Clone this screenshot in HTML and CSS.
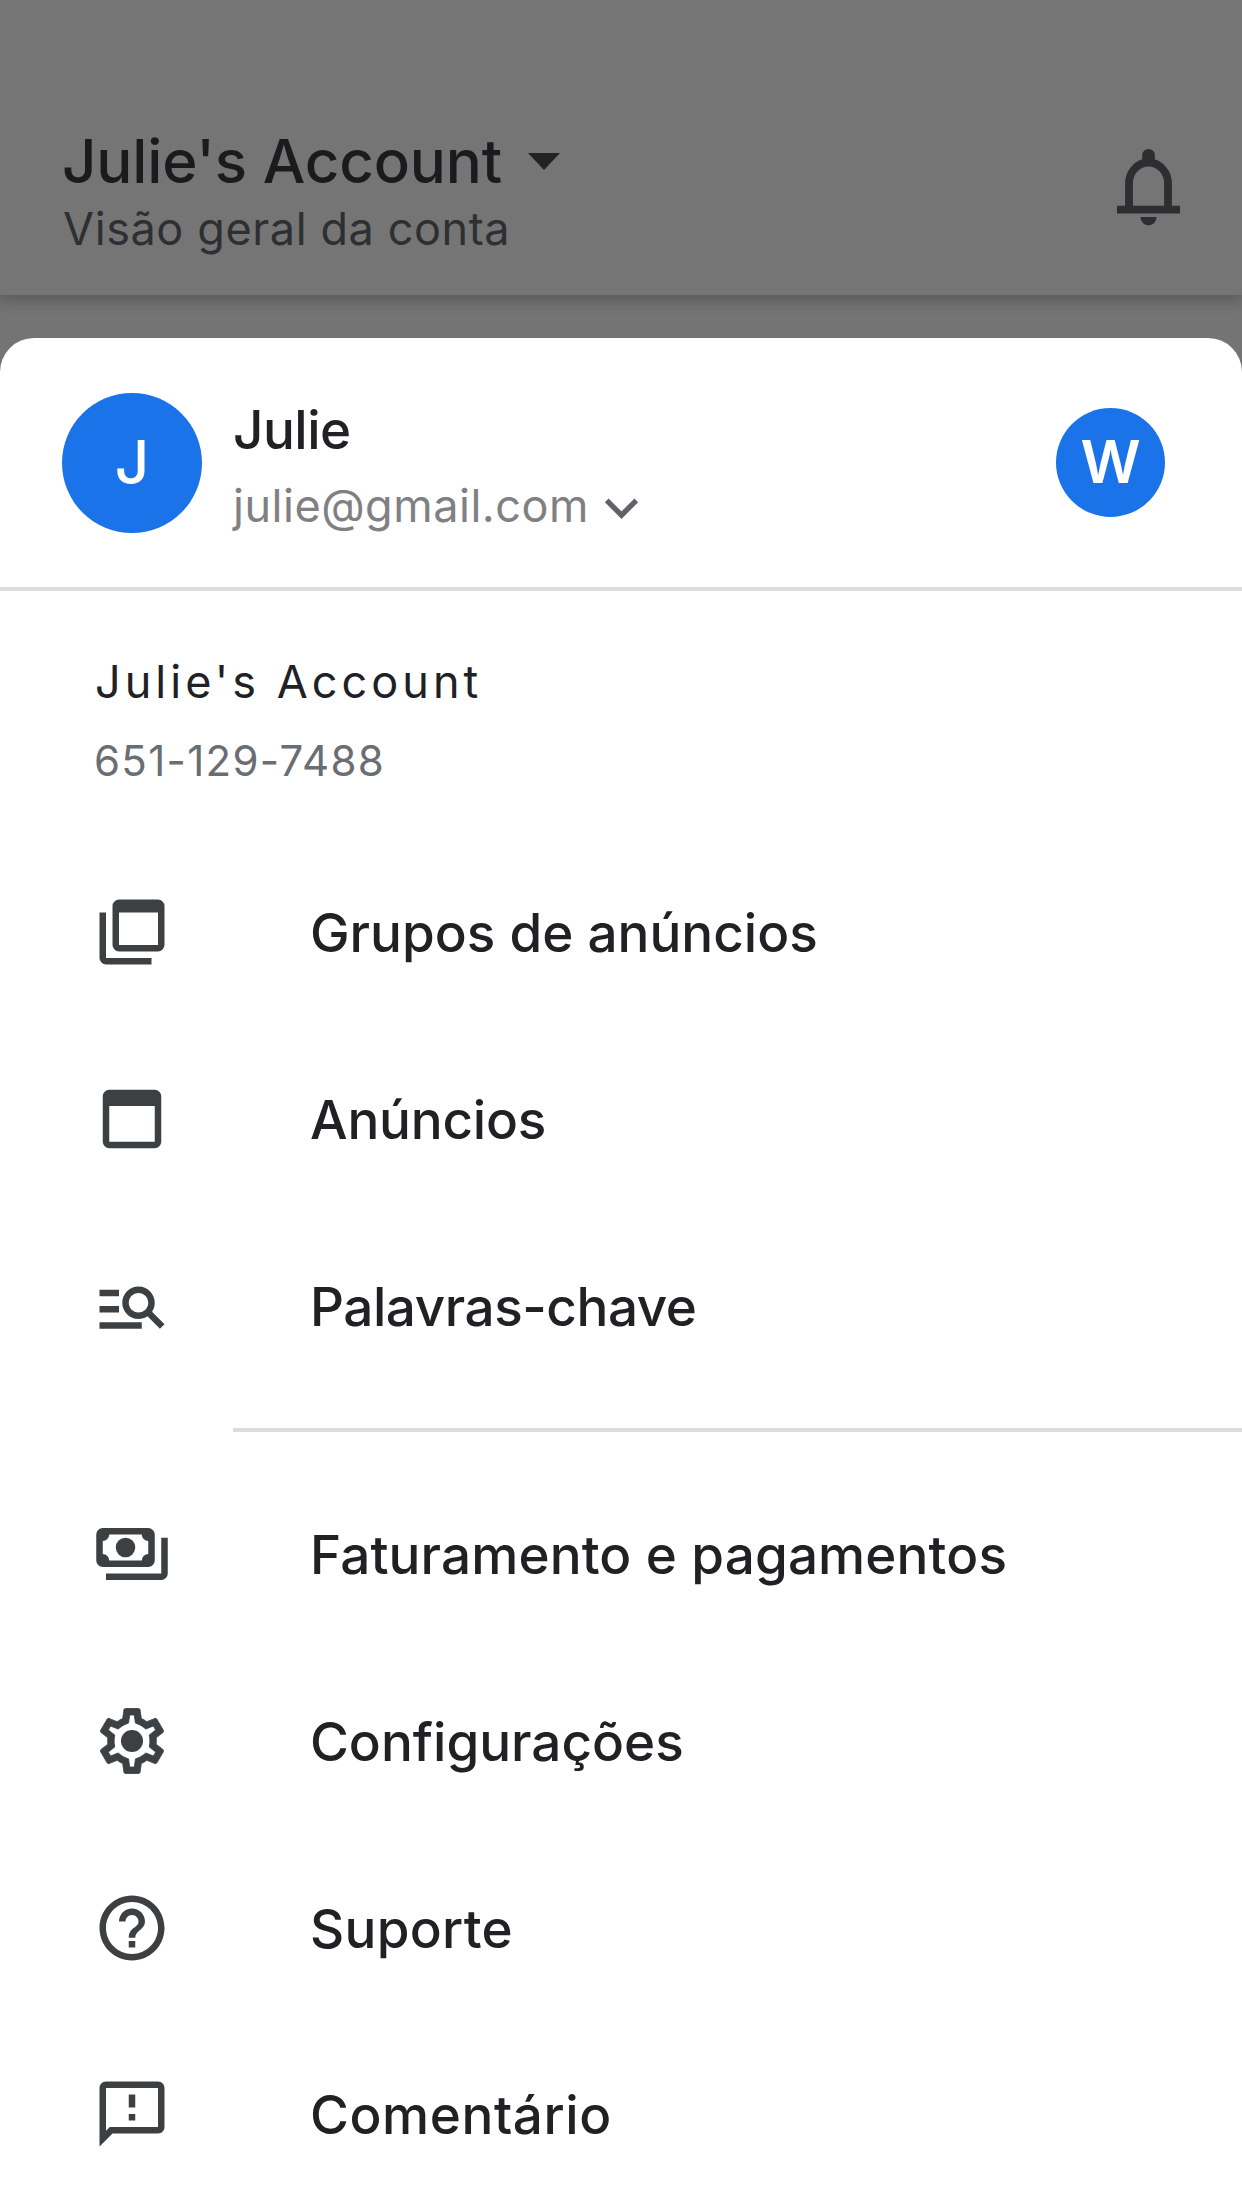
FILE: index.html
```
<!DOCTYPE html>
<html lang="pt-BR">
<head>
<meta charset="utf-8">
<title>Julie's Account</title>
<link rel="stylesheet" href="styles.css">
</head>
<body>
<div class="screen">
  <header class="topbar">
    <div class="topbar-text">
      <h1 class="topbar-title"><span>Julie's Account</span><svg class="caret" viewBox="0 0 32 17"><path d="M0 0h32L16 17z"/></svg></h1>
      <p class="topbar-subtitle">Visão geral da conta</p>
    </div>
    <svg class="bell" viewBox="0 0 63 77">
      <path d="M12 60V34.500a19.500 21 0 0 1 39 0V60" fill="none" stroke="currentColor" stroke-width="7.800"/>
      <path d="M25.200 12V6a6.300 6 0 0 1 12.600 0v6zM0 56.700h63v7.800H0zM23.500 68h16a8 8.500 0 0 1-16 0z"/>
    </svg>
  </header>
  <main class="sheet">
    <section class="profile">
      <div class="avatar avatar-large">J</div>
      <div class="profile-text">
        <div class="profile-name">Julie</div>
        <div class="profile-email"><span>julie@gmail.com</span><svg class="chevron" viewBox="0 0 36 22"><path d="M2.500 2.500L18 18 33.500 2.500"/></svg></div>
      </div>
      <div class="avatar avatar-small">W</div>
    </section>
    <section class="account">
      <div class="account-name">Julie's Account</div>
      <div class="account-id">651-129-7488</div>
    </section>
    <nav>
      <ul class="menu">
        <li class="item"><svg class="icon" viewBox="0 0 24 24"><path fill-rule="evenodd" d="M8 2h12a2 2 0 0 1 2 2v12a2 2 0 0 1-2 2H8a2 2 0 0 1-2-2V4a2 2 0 0 1 2-2zM8 6v10h12V6zM2 6h2v14h14v2H4a2 2 0 0 1-2-2z"/></svg><span class="grupos">Grupos de anúncios</span></li>
        <li class="item"><svg class="icon" viewBox="0 0 24 24"><path fill-rule="evenodd" d="M5 3h14a2 2 0 0 1 2 2v14a2 2 0 0 1-2 2H5a2 2 0 0 1-2-2V5a2 2 0 0 1 2-2zM5 8v11h14V8z"/></svg><span class="anuncios">Anúncios</span></li>
        <li class="item"><svg class="icon" viewBox="0 0 24 24"><path d="M8 9H2V7h6v2zm0 3H2v2h6v-2zm12.590 7l-3.830-3.830c-.8.520-1.740.830-2.760.830-2.760 0-5-2.240-5-5s2.240-5 5-5 5 2.240 5 5c0 1.020-.310 1.960-.830 2.750L22 17.590 20.590 19zM17 11c0-1.650-1.350-3-3-3s-3 1.350-3 3 1.350 3 3 3 3-1.350 3-3zM2 19h13v-2H2v2z"/></svg><span class="palavras">Palavras-chave</span></li>
      </ul>
      <hr class="divider">
      <ul class="menu">
        <li class="item"><svg class="icon" viewBox="0 0 24 24"><path fill-rule="evenodd" d="M3 4h14a2 2 0 0 1 2 2v8a2 2 0 0 1-2 2H3a2 2 0 0 1-2-2V6a2 2 0 0 1 2-2zM5 6a2 2 0 0 1-2 2v4a2 2 0 0 1 2 2h10a2 2 0 0 1 2-2V8a2 2 0 0 1-2-2z"/><circle cx="10" cy="10" r="3"/><path d="M21 7h2v11a2 2 0 0 1-2 2H4v-2h17z"/></svg><span class="faturamento">Faturamento e pagamentos</span></li>
        <li class="item"><svg class="icon" viewBox="0 0 24 24"><path stroke="currentColor" stroke-width=".250" d="M19.430 12.980c.040-.320.070-.640.070-.980 0-.340-.030-.660-.070-.980l2.110-1.650c.190-.150.240-.420.120-.640l-2-3.460c-.090-.160-.260-.250-.440-.250-.060 0-.120.010-.170.030l-2.490 1c-.520-.4-1.080-.730-1.690-.980l-.380-2.650C14.460 2.180 14.250 2 14 2h-4c-.250 0-.460.180-.490.420l-.380 2.650c-.610.250-1.170.590-1.690.980l-2.490-1c-.060-.020-.120-.030-.180-.030-.170 0-.340.090-.430.250l-2 3.460c-.130.220-.070.490.120.640l2.110 1.650c-.040.320-.070.650-.070.980 0 .330.030.660.070.980l-2.110 1.650c-.190.150-.240.420-.120.640l2 3.460c.090.160.260.250.440.250.060 0 .120-.010.170-.030l2.490-1c.520.4 1.080.730 1.690.980l.380 2.650c.030.240.240.420.490.420h4c.250 0 .460-.180.490-.420l.380-2.650c.610-.250 1.170-.590 1.690-.980l2.490 1c.060.020.120.030.180.030.170 0 .340-.090.430-.250l2-3.460c.120-.220.070-.490-.120-.640l-2.110-1.650zm-1.980-1.710c.040.310.050.520.050.730 0 .210-.020.430-.050.730l-.140 1.130.890.700 1.080.840-.7 1.210-1.270-.510-1.040-.420-.9.680c-.430.320-.840.560-1.250.730l-1.060.430-.160 1.130-.2 1.350h-1.400l-.190-1.350-.160-1.130-1.060-.430c-.430-.180-.830-.410-1.230-.710l-.910-.7-1.060.430-1.270.510-.7-1.210 1.080-.840.890-.7-.140-1.130c-.030-.310-.050-.540-.050-.740s.020-.430.050-.730l.140-1.130-.890-.7-1.080-.840.7-1.210 1.270.510 1.040.420.9-.680c.430-.320.840-.560 1.250-.730l1.060-.430.160-1.130.2-1.350h1.390l.190 1.350.160 1.130 1.060.430c.430.180.830.410 1.230.710l.910.7 1.060-.430 1.270-.510.7 1.210-1.070.850-.890.7.140 1.130z"/><circle cx="12" cy="12" r="3.400"/></svg><span class="config">Configurações</span></li>
        <li class="item"><svg class="icon" viewBox="0 0 24 24"><path d="M11 16h2v2h-2zM12 2C6.480 2 2 6.480 2 12s4.480 10 10 10 10-4.480 10-10S17.520 2 12 2zm0 18c-4.410 0-8-3.590-8-8s3.590-8 8-8 8 3.590 8 8-3.590 8-8 8zm0-14c-2.210 0-4 1.790-4 4h2c0-1.100.9-2 2-2s2 .9 2 2c0 2-3 1.750-3 5h2c0-2.250 3-2.500 3-5 0-2.210-1.790-4-4-4z"/></svg><span class="suporte">Suporte</span></li>
        <li class="item"><svg class="icon" viewBox="0 0 24 24"><path d="M20 2H4c-1.100 0-2 .9-2 2v18l4-4h14c1.100 0 2-.9 2-2V4c0-1.100-.9-2-2-2zm0 14H5.170L4 17.170V4h16v12zm-9-4h2v2h-2zm0-6h2v4h-2z"/></svg><span class="comentario">Comentário</span></li>
      </ul>
    </nav>
  </main>
</div>
</body>
</html>
```
FILE: styles.css
```
* { box-sizing: border-box; }
body, h1, p, ul { margin: 0; padding: 0; }
body {
  background: #757575;
  font-family: Inter, "Liberation Sans", sans-serif;
  color: #202124;
}
svg { display: block; fill: currentColor; flex: none; }
.screen {
  height: 2208px;
  overflow: hidden;
  display: flex;
  flex-direction: column;
  background: #747474;
}
.topbar {
  height: 295px;
  flex: none;
  padding: 125px 62px 0;
  display: flex;
  justify-content: space-between;
  background: #757575;
  box-shadow: 0 4px 14px 2px rgba(0, 0, 0, .22);
}
.topbar-title {
  display: flex;
  align-items: center;
  gap: 26px;
  font-size: 60px;
  line-height: 72px;
  font-weight: 500;
  letter-spacing: -.15px;
  color: #1a1b1d;
}
.caret { width: 32px; height: 17px; color: #222326; }
.topbar-subtitle {
  margin: 5px 0 0 1px;
  font-size: 45px;
  line-height: 54px;
  letter-spacing: .6px;
  color: #2e2f33;
}
.bell { width: 63px; height: 77px; margin-top: 24px; color: #2d2e32; }
.sheet {
  flex: 1;
  margin-top: 43px;
  background: #fff;
  border-radius: 34px 34px 0 0;
}
.profile {
  height: 253px;
  display: flex;
  align-items: center;
  padding: 0 77px 0 62px;
  border-bottom: 4px solid #dadce0;
}
.avatar {
  flex: none;
  display: flex;
  align-items: center;
  justify-content: center;
  padding-bottom: 2px;
  border-radius: 50%;
  background: #1a73e8;
  color: #fff;
  font-size: 60px;
  font-weight: 500;
}
.avatar-large { width: 140px; height: 140px; }
.avatar-small { width: 109px; height: 109px; margin-left: auto; font-size: 59px; font-weight: 600; }
.profile-text { padding: 6px 0 0 31px; }
.profile-name {
  font-size: 53px;
  line-height: 64px;
  font-weight: 500;
  letter-spacing: -.5px;
}
.profile-email {
  margin-top: 17px;
  display: flex;
  align-items: center;
  gap: 15px;
  font-size: 45px;
  line-height: 54px;
  letter-spacing: .52px;
  color: #808082;
}
.chevron {
  width: 35px;
  height: 21px;
  margin-top: 5px;
  fill: none;
  stroke: #5f6368;
  stroke-width: 5.5px;
}
.account { height: 248px; padding: 64px 0 0 95px; }
.account-name {
  font-size: 45px;
  line-height: 54px;
  letter-spacing: 4.02px;
}
.account-id {
  margin: 27px 0 0 -1px;
  font-size: 42px;
  line-height: 50px;
  letter-spacing: 1.3px;
  color: #6a6d72;
}
.menu { list-style: none; }
.item {
  height: 186.7px;
  display: flex;
  align-items: center;
  gap: 139px;
  padding-left: 93px;
  font-size: 53px;
  font-weight: 480;
  white-space: nowrap;
}
.item span { padding-top: 2px; }
.icon { width: 78px; height: 78px; color: #3c4043; }
.divider {
  height: 4px;
  margin: 29px 0 29px 233px;
  border: 0;
  background: #dadce0;
}
.grupos { letter-spacing: 0; }
.anuncios { letter-spacing: -.2px; }
.palavras { letter-spacing: -.45px; }
.faturamento { letter-spacing: .13px; }
.config { letter-spacing: 0; }
.suporte { letter-spacing: .3px; }
.comentario { letter-spacing: .6px; }
```
